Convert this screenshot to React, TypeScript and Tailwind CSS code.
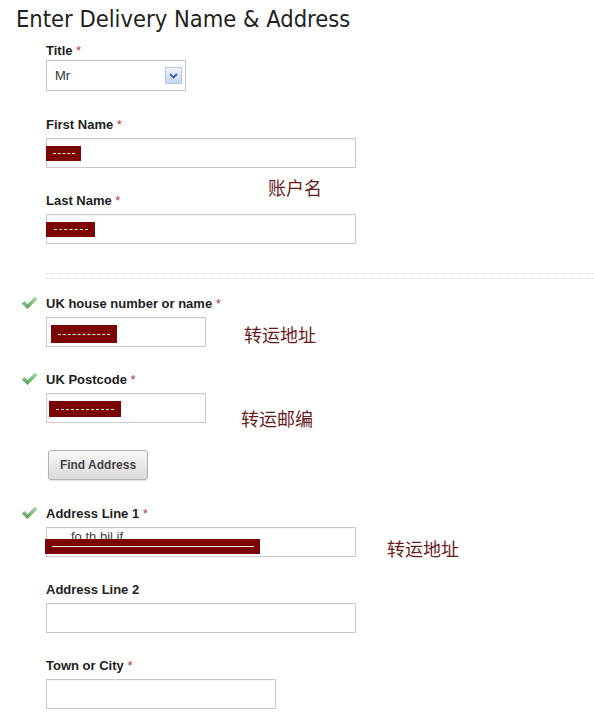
import React from 'react';

const Req = () => <span className="font-normal text-[#b03a3a]"> *</span>;

const noteCls =
  "font-['Noto_Sans_CJK_SC',sans-serif] text-[18px] leading-[18px] text-[#6a1c1c] whitespace-nowrap";

function Check() {
  return (
    <svg width="17" height="14" viewBox="0 0 17 14">
      <defs>
        <linearGradient id="ck" x1="0" y1="0" x2="0" y2="1">
          <stop offset="0" stopColor="#b4e0b0" />
          <stop offset="1" stopColor="#4f9a57" />
        </linearGradient>
      </defs>
      <path d="M0.5 7.5 L3.5 5 L6.5 8 L14 0.5 L16.5 3 L6.5 13 Z" fill="url(#ck)" />
    </svg>
  );
}

function Label({ text, req = true }: { text: string; req?: boolean }) {
  return (
    <div className="mb-[5px] h-4 text-[13px] font-bold leading-4 text-[#1e1e1e]">
      {text}
      {req && <Req />}
    </div>
  );
}

function Box({ w, children }: { w: string; children?: React.ReactNode }) {
  return (
    <div className={`relative h-[30px] shrink-0 border border-[#cacaca] bg-white shadow-[inset_0_1px_1px_rgba(0,0,0,0.04)] ${w}`}>
      {children}
    </div>
  );
}

// maroon blocks covering the typed values
function Redact({ pos, line }: { pos: string; line: string }) {
  return (
    <div className={`absolute flex items-center bg-[#7b0505] ${pos}`}>
      <div className={`border-t border-dashed border-white/90 ${line}`} />
    </div>
  );
}

function Row({ check, className, children }: { check?: boolean; className?: string; children: React.ReactNode }) {
  return (
    <div className={`flex ${className ?? ''}`}>
      <div className="w-[25px] shrink-0">{check && <Check />}</div>
      <div className="min-w-0 flex-1">{children}</div>
    </div>
  );
}

export default function App() {
  return (
    <div className="min-h-screen bg-white font-['Liberation_Sans',Arial,sans-serif] text-[#222]">
      <h1 className="pl-4 pt-[5px] font-['DejaVu_Sans_Condensed','DejaVu_Sans',sans-serif] text-[23.5px] font-normal leading-[28px] [font-stretch:condensed]">
        Enter Delivery Name &amp; Address
      </h1>

      <div className="pl-[21px]">
        <Row className="mt-[10px]">
          <div className="mb-px h-4 text-[13px] font-bold leading-4 text-[#1e1e1e]">
            Title<Req />
          </div>
          <div className="flex h-[31px] w-[140px] items-center justify-between border border-[#c5c5c5] bg-white pl-2 pr-[3px]">
            <span className="text-[13px] text-[#333]">Mr</span>
            <span className="flex h-[17px] w-[17px] items-center justify-center border border-[#b3c7e6] bg-gradient-to-b from-[#eef3fc] to-[#c6d7f2]">
              <svg width="9" height="6" viewBox="0 0 9 6">
                <path d="M1 1 L4.5 4.5 L8 1" stroke="#3c5ea6" strokeWidth="1.8" fill="none" />
              </svg>
            </span>
          </div>
        </Row>

        <Row className="mt-[26px]">
          <Label text="First Name" />
          <Box w="w-[310px]">
            <Redact pos="left-[-1px] top-[7px] h-[15px] w-[35px]" line="mx-auto w-[22px]" />
          </Box>
        </Row>

        <Row className="mt-[25px]">
          <div className="relative">
            <span className={`absolute left-[222px] top-[-15px] ${noteCls}`}>账户名</span>
            <Label text="Last Name" />
          </div>
          <Box w="w-[310px]">
            <Redact pos="left-[-1px] top-[7px] h-[15px] w-[49px]" line="mx-auto w-[34px]" />
          </Box>
        </Row>

        <Row className="mt-[29px]">
          <div className="h-[6px] border-y border-dotted border-[#dcdcdc]" />
        </Row>

        <Row check className="mt-[17px]">
          <Label text="UK house number or name" />
          <div className="flex h-[30px] items-start">
            <Box w="w-[160px]">
              <Redact pos="left-[4px] top-[7px] h-[18px] w-[66px]" line="mx-auto w-[52px]" />
            </Box>
            <span className={`ml-[38px] mt-[8px] ${noteCls}`}>转运地址</span>
          </div>
        </Row>

        <Row check className="mt-[25px]">
          <Label text="UK Postcode" />
          <div className="flex h-[30px] items-start">
            <Box w="w-[160px]">
              <Redact pos="left-[2px] top-[7px] h-[16px] w-[72px]" line="mx-auto w-[58px]" />
            </Box>
            <span className={`ml-[35px] mt-[16px] ${noteCls}`}>转运邮编</span>
          </div>
        </Row>

        <Row className="mt-[27px]">
          <button className="ml-[2px] h-[30px] w-[100px] rounded-[3px] border border-[#b3b3b3] bg-gradient-to-b from-[#f8f8f8] to-[#dadada] text-[12px] font-bold text-[#444] shadow-[0_1px_1px_rgba(0,0,0,0.12)]">
            Find Address
          </button>
        </Row>

        <Row check className="mt-[26px]">
          <Label text="Address Line 1" />
          <div className="flex h-[30px] items-start">
            <Box w="w-[310px]">
              <span className="absolute left-[24px] top-[1px] text-[13px] leading-4 text-[#444]">fo th bil if</span>
              <Redact pos="left-[-2px] top-[11px] h-[15px] w-[215px]" line="ml-[7px] w-[202px] border-solid" />
            </Box>
            <span className={`ml-[31px] mt-[12px] ${noteCls}`}>转运地址</span>
          </div>
        </Row>

        <Row className="mt-[25px]">
          <Label text="Address Line 2" req={false} />
          <Box w="w-[310px]" />
        </Row>

        <Row className="mt-[25px]">
          <Label text="Town or City" />
          <Box w="w-[230px]" />
        </Row>
      </div>
    </div>
  );
}
